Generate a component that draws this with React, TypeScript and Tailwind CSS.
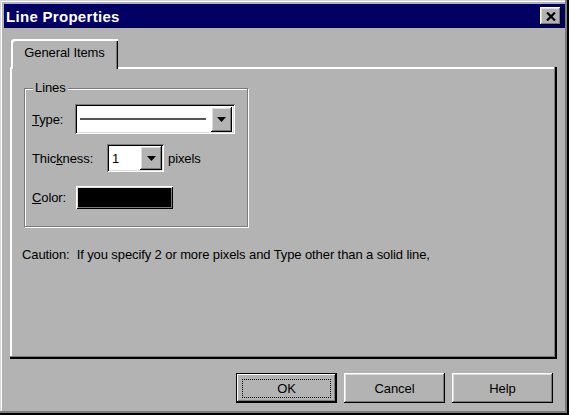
import * as React from "react";

const raised =
  "shadow-[inset_-1px_-1px_0_#000,inset_1px_1px_0_#fff,inset_-2px_-2px_0_#7b7b7b,inset_2px_2px_0_#dcdcdc]";
const sunken =
  "shadow-[inset_1px_1px_0_#7b7b7b,inset_-1px_-1px_0_#fff,inset_2px_2px_0_#000,inset_-2px_-2px_0_#dcdcdc]";

const Arrow = () => (
  <svg width="9" height="5" viewBox="0 0 9 5">
    <path d="M0 0h9L4.5 5z" fill="#000" />
  </svg>
);

const DropButton: React.FC<{ className: string }> = ({ className }) => (
  <div className={`flex items-center justify-center bg-[#b3b3b3] ${raised} ${className}`}>
    <Arrow />
  </div>
);

const PushButton: React.FC<{ label: string; isDefault?: boolean }> = ({ label, isDefault }) => (
  <div
    className={`w-[101px] h-[30px] flex items-center justify-center bg-[#b3b3b3] ${
      isDefault
        ? "shadow-[inset_0_0_0_1px_#000,inset_-2px_-2px_0_#000,inset_2px_2px_0_#fff,inset_-3px_-3px_0_#7b7b7b]"
        : raised
    }`}
  >
    {isDefault ? (
      <div className="w-[89px] h-[19px] border border-dotted border-black flex items-center justify-center">
        {label}
      </div>
    ) : (
      label
    )}
  </div>
);

export default function App() {
  return (
    <div
      className="w-[569px] h-[415px] bg-[#b3b3b3] flex flex-col pt-[4px] px-[4px] text-[13px] tracking-[-0.1px] text-black leading-none shadow-[inset_-2px_-2px_0_#000,inset_-4px_-4px_0_#7b7b7b,inset_1px_1px_0_#d6d6d6,inset_2px_2px_0_#fff]"
      style={{ fontFamily: '"Liberation Sans", Arial, sans-serif' }}
    >
      {/* title bar */}
      <div className="h-[24px] bg-[#000064] flex items-center justify-between pl-[2px] pr-[4px]">
        <span className="text-white font-bold text-[15px] tracking-[0.3px]">Line Properties</span>
        <div className={`w-[21px] h-[18px] bg-[#b3b3b3] flex items-center justify-center ${raised}`}>
          <svg width="10" height="9" viewBox="0 0 10 9">
            <path d="M1 0.5l8 8M9 0.5l-8 8" stroke="#000" strokeWidth="2.2" />
          </svg>
        </div>
      </div>

      {/* tabs + panel */}
      <div className="flex flex-col pl-[6px] pr-[8px] mt-[11px]">
        <div className="flex">
          <div className="relative z-10 ml-[1px] -mb-[2px] w-[107px] h-[30px] bg-[#b3b3b3] rounded-tl-[3px] flex items-center justify-center pb-[4px] shadow-[inset_2px_2px_0_#fff,inset_-1px_0_0_#000,inset_-2px_0_0_#7b7b7b]">
            General Items
          </div>
        </div>
        <div className="h-[292px] flex flex-col pl-[14px] pt-[21px] shadow-[inset_-2px_-2px_0_#000,inset_-3px_-3px_0_#7b7b7b,inset_2px_2px_0_#fff]">
          {/* group box */}
          <div className="relative w-[224px] h-[139px] border border-[#7b7b7b] shadow-[1px_1px_0_#fff,inset_1px_1px_0_#fff] flex flex-col pl-[7px] pt-[15px]">
            <span className="absolute -top-[8px] left-[8px] bg-[#b3b3b3] px-[2px]">Lines</span>

            <div className="flex items-center h-[30px]">
              <span className="w-[43px]">
                <u>T</u>ype:
              </span>
              <div className={`w-[160px] h-[30px] bg-white flex items-center pl-[5px] pr-[3px] ${sunken}`}>
                <div className="flex-1 h-[2px] bg-[#555] mr-[5px]" />
                <DropButton className="w-[21px] h-[25px]" />
              </div>
            </div>

            <div className="flex items-center h-[28px] mt-[10px]">
              <span className="w-[75px]">
                Thic<u>k</u>ness:
              </span>
              <div className={`w-[57px] h-[28px] bg-white flex items-center pl-[5px] pr-[2px] ${sunken}`}>
                <span className="flex-1">1</span>
                <DropButton className="w-[22px] h-[24px]" />
              </div>
              <span className="ml-[4px]">pixels</span>
            </div>

            <div className="flex items-center h-[23px] mt-[14px]">
              <span className="w-[44px]">
                <u>C</u>olor:
              </span>
              <div className="w-[97px] h-[23px] bg-black shadow-[inset_1px_1px_0_#fff,inset_-1px_-1px_0_#000,inset_2px_2px_0_#dcdcdc,inset_-2px_-2px_0_#7b7b7b,inset_3px_3px_0_#000]" />
            </div>
          </div>

          <div className="mt-[21px] -ml-[2px]">
            Caution:&nbsp; If you specify 2 or more pixels and Type other than a solid line,
          </div>
        </div>
      </div>

      {/* buttons */}
      <div className="flex justify-end gap-[7px] pr-[12px] mt-[14px]">
        <PushButton label="OK" isDefault />
        <PushButton label="Cancel" />
        <PushButton label="Help" />
      </div>
    </div>
  );
}
